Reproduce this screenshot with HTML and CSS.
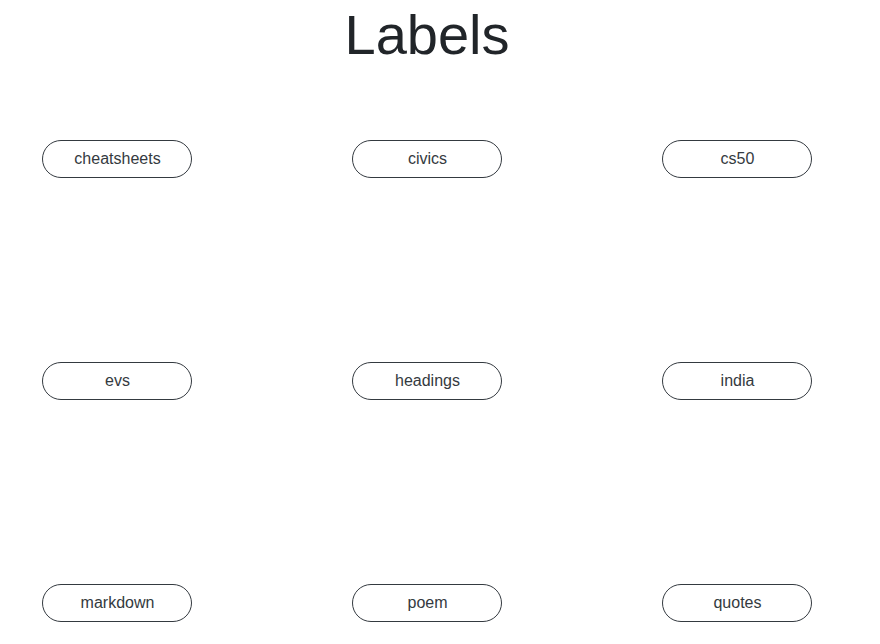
FILE: index.html
```html
<!DOCTYPE html>
<html lang="en">
<head>
<meta charset="utf-8">
<title>Labels</title>
<link rel="stylesheet" href="styles.css">
</head>
<body>
<main class="page">
  <h1 class="title">Labels</h1>
  <div class="labels">
    <button type="button" class="label">cheatsheets</button>
    <button type="button" class="label">civics</button>
    <button type="button" class="label">cs50</button>
    <button type="button" class="label">evs</button>
    <button type="button" class="label">headings</button>
    <button type="button" class="label">india</button>
    <button type="button" class="label">markdown</button>
    <button type="button" class="label">poem</button>
    <button type="button" class="label">quotes</button>
  </div>
</main>
</body>
</html>
```

FILE: styles.css
```css
* {
  box-sizing: border-box;
}

body {
  margin: 0;
  background: #fff;
  color: #212529;
  font-family: "Liberation Sans", Arial, sans-serif;
  font-size: 16px;
  line-height: 24px;
}

.page {
  padding: 0 68px 22px 42px;
}

.title {
  margin: 0 0 70px;
  font-size: 56px;
  font-weight: 300;
  line-height: 70px;
  text-align: center;
}

.labels {
  display: grid;
  grid-template-columns: repeat(3, 150px);
  justify-content: space-between;
  row-gap: 184px;
}

.label {
  padding: 6px 12px 6px 13px;
  border: 1px solid #343a40;
  border-radius: 20px;
  background: #fff;
  color: #343a40;
  font: inherit;
  text-align: center;
  cursor: pointer;
}

.label:hover {
  background: #343a40;
  color: #fff;
}
```
